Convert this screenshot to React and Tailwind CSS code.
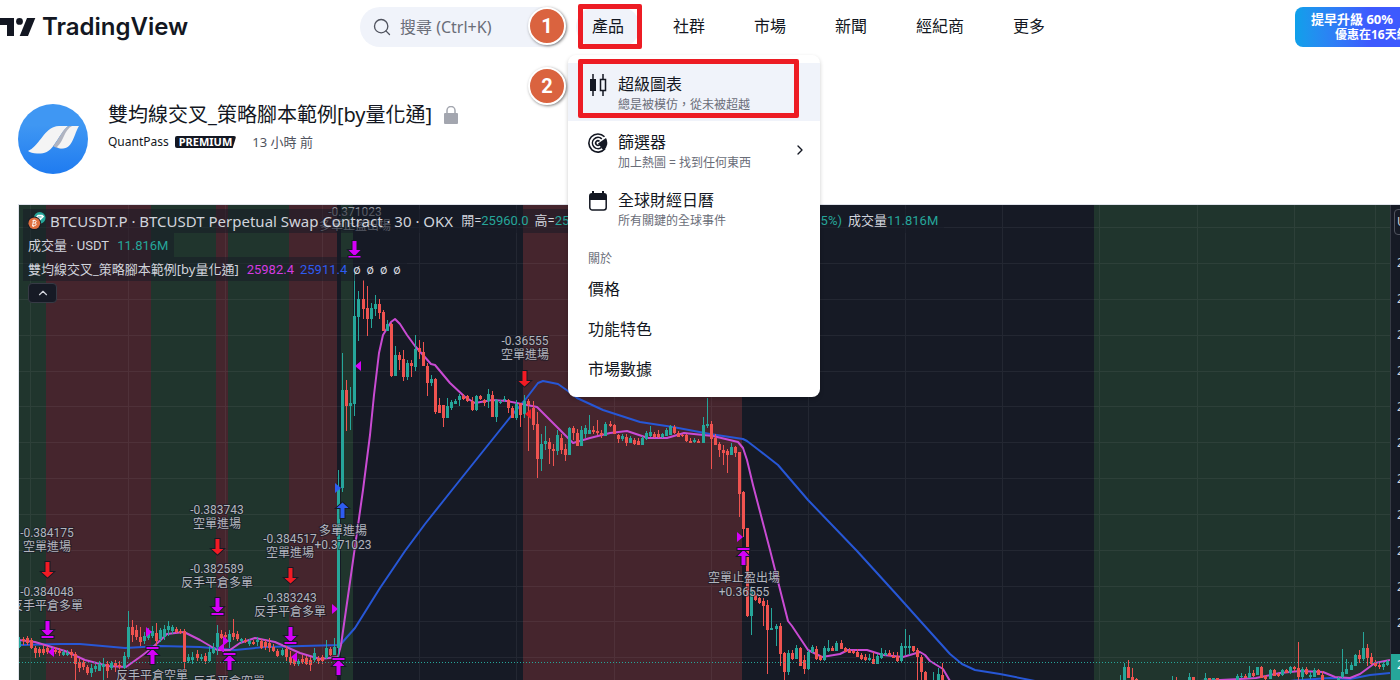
import { ChevronRight, ChevronUp, Search } from 'lucide-react'

const UP = '#26a69a'
const DOWN = '#ef5350'
const PINK = '#d500f9'
const RED = '#f31b24'
const BLUE = '#2e5cf0'

const NAV = ['社群', '市場', '新聞', '經紀商', '更多']

const BANDS = [
  [19, 46, '#20352d'],
  [46, 151, '#45252d'],
  [151, 216, '#20352d'],
  [216, 228, '#45252d'],
  [228, 289, '#20352d'],
  [289, 337, '#45252d'],
  [341, 353, '#20352d'],
  [523, 742, '#45252d'],
  [1094, 1390, '#20352d'],
]

const GRID_X = [30, 128, 225, 322, 419, 516, 614, 711, 808, 905, 1002, 1099, 1197, 1294, 1375]
const GRID_Y = [227, 263, 299, 335, 371, 406, 442, 478, 514, 550, 586, 621, 657]

// x, high, body top, body bottom, low, 1 = up / 0 = down
const CANDLES = [
  [19, 637, 641, 647, 648, 1], [23, 637, 639, 641, 645, 0], [27, 636, 638, 643, 645, 0], [31, 638, 640, 648, 649, 0],
  [35, 646, 648, 653, 658, 0], [39, 647, 649, 653, 657, 0], [43, 645, 649, 653, 655, 0], [47, 646, 648, 652, 654, 0],
  [51, 648, 650, 653, 655, 1], [55, 647, 650, 652, 654, 0], [59, 648, 651, 653, 656, 0], [63, 650, 652, 655, 656, 1],
  [67, 650, 653, 655, 656, 1], [71, 649, 652, 655, 658, 0], [75, 652, 654, 664, 680, 0], [79, 658, 662, 668, 672, 0],
  [83, 660, 662, 667, 670, 0], [87, 665, 667, 673, 675, 0], [91, 664, 668, 673, 677, 1], [95, 664, 666, 669, 672, 1],
  [99, 661, 664, 671, 671, 1], [103, 658, 664, 667, 681, 1], [107, 661, 664, 671, 678, 0], [111, 661, 663, 668, 670, 1],
  [115, 660, 663, 666, 672, 0], [119, 661, 665, 667, 670, 0], [124, 652, 656, 668, 669, 1], [128, 611, 627, 657, 659, 1],
  [132, 620, 627, 635, 642, 0], [136, 625, 630, 637, 640, 0], [140, 627, 637, 642, 646, 0], [144, 632, 636, 641, 644, 1],
  [148, 628, 631, 638, 640, 1], [152, 626, 631, 636, 638, 1], [156, 623, 633, 641, 646, 0], [160, 628, 630, 639, 642, 1],
  [164, 625, 629, 637, 640, 1], [168, 621, 626, 630, 636, 1], [172, 625, 627, 631, 634, 1], [176, 627, 629, 632, 633, 0],
  [180, 629, 631, 633, 634, 0], [184, 629, 631, 662, 671, 0], [188, 654, 657, 661, 663, 1], [192, 652, 657, 660, 664, 1],
  [197, 650, 654, 658, 661, 0], [201, 654, 657, 659, 661, 1], [205, 653, 656, 661, 664, 0], [209, 646, 652, 661, 662, 1],
  [213, 643, 648, 653, 654, 1], [217, 625, 633, 647, 655, 1], [221, 630, 634, 638, 639, 0], [225, 632, 635, 637, 642, 0],
  [229, 630, 634, 642, 648, 1], [233, 619, 633, 637, 640, 0], [237, 631, 634, 639, 641, 0], [241, 638, 639, 641, 643, 1],
  [245, 638, 640, 642, 643, 0], [249, 639, 641, 644, 646, 1], [253, 640, 642, 644, 645, 0], [257, 637, 640, 642, 646, 1],
  [261, 639, 641, 648, 649, 0], [265, 640, 642, 647, 650, 0], [269, 638, 643, 648, 652, 0], [273, 644, 647, 651, 652, 0],
  [277, 649, 651, 656, 657, 0], [282, 648, 650, 655, 656, 1], [286, 646, 649, 657, 661, 0], [290, 651, 657, 663, 665, 0],
  [294, 655, 659, 664, 666, 0], [298, 659, 661, 664, 666, 1], [302, 655, 659, 662, 664, 0], [306, 656, 658, 664, 665, 0],
  [310, 657, 660, 665, 671, 0], [314, 648, 653, 660, 662, 1], [318, 656, 658, 661, 664, 0], [322, 655, 657, 661, 664, 0],
  [326, 640, 648, 658, 659, 1], [330, 647, 649, 655, 656, 0], [334, 638, 647, 655, 655, 1], [338, 470, 488, 648, 658, 1],
  [342, 353, 390, 488, 492, 1], [346, 380, 390, 406, 431, 0], [350, 387, 403, 406, 430, 1], [354, 268, 316, 404, 416, 1],
  [358, 291, 299, 317, 341, 1], [363, 280, 299, 309, 319, 0], [367, 286, 308, 319, 336, 0], [371, 303, 308, 319, 328, 1],
  [375, 295, 304, 309, 316, 1], [379, 299, 304, 313, 319, 0], [383, 310, 312, 331, 331, 0], [387, 320, 324, 331, 331, 1],
  [391, 323, 324, 376, 377, 0], [395, 346, 355, 376, 376, 1], [399, 352, 355, 360, 370, 0], [403, 350, 359, 377, 381, 0],
  [407, 360, 363, 377, 380, 1], [411, 360, 363, 366, 377, 0], [415, 335, 349, 367, 371, 1], [419, 340, 348, 352, 359, 0],
  [423, 342, 352, 366, 366, 0], [427, 363, 366, 383, 396, 0], [431, 375, 379, 383, 386, 1], [435, 378, 379, 412, 414, 0],
  [439, 398, 405, 413, 413, 0], [443, 405, 405, 418, 427, 0], [447, 398, 406, 418, 418, 1], [451, 400, 402, 408, 410, 1],
  [455, 399, 401, 404, 404, 1], [459, 394, 396, 400, 406, 1], [463, 394, 396, 399, 400, 0], [467, 395, 396, 401, 402, 0],
  [472, 397, 401, 410, 411, 0], [476, 395, 396, 410, 411, 1], [480, 395, 396, 399, 400, 0], [484, 399, 400, 403, 406, 0],
  [488, 389, 394, 401, 408, 1], [492, 391, 395, 417, 417, 0], [496, 399, 400, 417, 422, 1], [500, 400, 402, 403, 404, 1],
  [504, 396, 399, 400, 402, 1], [508, 399, 400, 408, 413, 0], [512, 406, 408, 418, 418, 0], [516, 400, 404, 418, 420, 1],
  [520, 403, 403, 415, 427, 0], [524, 395, 401, 414, 418, 1], [528, 399, 401, 405, 451, 0], [533, 401, 408, 425, 430, 0],
  [537, 412, 424, 459, 478, 0], [541, 434, 444, 459, 471, 1], [545, 426, 441, 444, 450, 1], [549, 438, 442, 449, 464, 0],
  [553, 444, 449, 451, 466, 0], [557, 430, 435, 451, 455, 1], [561, 434, 438, 450, 454, 0], [565, 444, 449, 455, 461, 0],
  [569, 427, 428, 455, 455, 1], [573, 426, 428, 433, 440, 0], [577, 429, 433, 446, 446, 0], [581, 426, 430, 446, 446, 1],
  [585, 425, 428, 434, 438, 1], [589, 415, 430, 434, 434, 1], [593, 426, 430, 432, 434, 0], [597, 420, 431, 433, 435, 0],
  [601, 430, 433, 435, 438, 0], [605, 422, 424, 436, 436, 1], [610, 421, 424, 426, 427, 0], [614, 424, 425, 434, 434, 0],
  [618, 434, 435, 439, 443, 0], [622, 434, 436, 439, 441, 1], [626, 434, 437, 443, 446, 0], [630, 436, 438, 443, 443, 1],
  [634, 438, 440, 444, 445, 0], [638, 438, 441, 445, 445, 0], [642, 436, 438, 445, 445, 1], [646, 431, 433, 439, 440, 1],
  [650, 426, 432, 436, 437, 1], [654, 432, 434, 437, 438, 0], [658, 430, 434, 437, 438, 0], [662, 433, 434, 437, 438, 1],
  [666, 428, 430, 436, 436, 1], [670, 425, 426, 435, 435, 1], [674, 425, 427, 433, 434, 0], [678, 431, 433, 437, 437, 0],
  [682, 434, 435, 436, 437, 0], [686, 434, 435, 441, 442, 0], [690, 438, 441, 443, 443, 0], [694, 438, 440, 442, 443, 1],
  [698, 439, 441, 443, 443, 0], [703, 417, 425, 443, 443, 1], [707, 398, 424, 426, 428, 1], [711, 421, 424, 439, 469, 0],
  [715, 434, 438, 445, 445, 0], [719, 442, 444, 450, 457, 0], [723, 445, 450, 453, 465, 0], [727, 449, 451, 455, 473, 0],
  [731, 443, 447, 455, 455, 1], [735, 446, 447, 453, 457, 0], [739, 452, 452, 494, 517, 0], [743, 491, 492, 529, 537, 0],
  [747, 528, 528, 616, 617, 0], [751, 586, 589, 616, 635, 1], [755, 593, 595, 600, 601, 0], [759, 597, 598, 603, 604, 0],
  [763, 598, 601, 606, 626, 0], [767, 600, 605, 630, 674, 0], [771, 608, 628, 630, 630, 1], [776, 624, 626, 629, 646, 1],
  [780, 623, 626, 654, 666, 0], [784, 652, 653, 672, 680, 0], [788, 650, 653, 672, 675, 1], [792, 650, 653, 659, 660, 0],
  [796, 645, 648, 659, 659, 1], [800, 647, 648, 666, 666, 0], [804, 655, 660, 669, 674, 0], [808, 650, 652, 669, 670, 1],
  [812, 645, 647, 652, 653, 1], [816, 646, 649, 659, 660, 0], [820, 655, 656, 660, 661, 0], [824, 646, 648, 660, 661, 1],
  [828, 640, 648, 651, 652, 1], [832, 646, 648, 651, 651, 0], [836, 641, 643, 651, 651, 1], [841, 640, 643, 649, 649, 0],
  [845, 647, 648, 652, 652, 0], [849, 648, 650, 653, 653, 0], [853, 650, 651, 653, 654, 0], [857, 649, 652, 657, 657, 0],
  [861, 653, 655, 659, 660, 0], [865, 654, 657, 660, 661, 0], [869, 654, 658, 660, 661, 1], [873, 652, 659, 664, 664, 0],
  [877, 654, 656, 664, 664, 1], [881, 648, 653, 658, 659, 1], [885, 650, 653, 655, 656, 1], [889, 650, 653, 656, 656, 0],
  [893, 652, 656, 658, 658, 0], [897, 652, 656, 661, 662, 0], [901, 643, 646, 661, 662, 1], [905, 629, 646, 648, 655, 1],
  [909, 635, 646, 648, 655, 1], [913, 646, 646, 651, 652, 0], [917, 648, 650, 657, 681, 0], [921, 655, 657, 672, 681, 0],
  [925, 671, 672, 681, 681, 0], [933, 672, 680, 681, 681, 1], [938, 668, 674, 681, 681, 1], [942, 663, 675, 681, 681, 0],
  [1120, 675, 681, 681, 681, 1], [1124, 663, 667, 681, 681, 1], [1128, 660, 667, 678, 678, 0], [1132, 668, 677, 681, 681, 0],
  [1136, 678, 679, 681, 681, 0], [1172, 676, 680, 681, 681, 1], [1176, 677, 680, 681, 681, 0], [1189, 673, 677, 681, 681, 1],
  [1193, 677, 677, 681, 681, 0], [1205, 673, 678, 681, 681, 1], [1209, 678, 678, 681, 681, 0], [1213, 678, 678, 681, 681, 1],
  [1217, 678, 678, 681, 681, 0], [1237, 674, 676, 681, 681, 1], [1241, 673, 676, 677, 678, 1], [1245, 674, 676, 678, 678, 0],
  [1249, 666, 673, 678, 678, 1], [1253, 670, 673, 676, 677, 0], [1257, 667, 667, 675, 675, 1], [1261, 666, 667, 678, 678, 0],
  [1265, 675, 676, 679, 680, 0], [1270, 669, 670, 679, 679, 1], [1274, 669, 670, 676, 676, 0], [1278, 673, 674, 676, 677, 0],
  [1282, 669, 670, 675, 676, 1], [1286, 669, 670, 673, 673, 0], [1290, 666, 667, 673, 674, 1], [1294, 666, 667, 669, 671, 0],
  [1298, 642, 668, 677, 680, 0], [1302, 667, 669, 677, 680, 1], [1306, 667, 669, 674, 675, 0], [1310, 672, 675, 677, 679, 1],
  [1314, 668, 670, 677, 677, 1], [1318, 669, 670, 675, 675, 0], [1322, 671, 675, 681, 681, 0], [1338, 677, 678, 681, 681, 1],
  [1342, 649, 672, 677, 678, 1], [1346, 659, 669, 674, 674, 1], [1351, 662, 665, 670, 670, 1], [1355, 654, 655, 666, 666, 1],
  [1359, 650, 655, 659, 663, 0], [1363, 632, 648, 659, 661, 1], [1367, 644, 648, 658, 666, 0], [1371, 653, 657, 664, 665, 0],
  [1375, 660, 663, 666, 667, 0], [1379, 663, 665, 667, 669, 0], [1383, 662, 664, 667, 670, 1], [1387, 660, 661, 665, 666, 1],
]

const FAST_MA = [
  '19,640 35,642 65,651 85,660 108,666 126,667 140,657 152,648 167,634 184,632 200,640 217,650 230,650 240,643 255,638 275,642 300,653 320,659 338,657 341,645 350,582 363,490 370,435 374,395 379,353 383,335 391,322 395,319 400,324 407,335 415,346 431,364 435,365 450,383 465,397 475,403 492,400 507,401 537,407 555,425 573,443 590,438 610,433 627,431 648,438 667,438 684,433 713,436 738,442 743,448 747,460 753,485 770,550 788,621 792,626 808,650 822,657 840,654 848,650 867,650 883,655 903,657 920,652 925,655 930,661 943,669 950,681',
  '1200,681 1240,679 1256,678 1280,673 1300,671 1323,672 1335,677 1350,678 1360,674 1375,663 1390,660',
]
const SLOW_MA = [
  '21,645 60,644 80,644 125,648 160,646 200,647 235,650 265,647 340,645 355,628 380,588 405,551 425,524 452,490 512,415 525,400 538,383 543,381 548,382 558,384 568,391 577,398 603,410 640,422 673,427 710,434 743,439 747,441 760,451 778,465 808,500 857,551 897,595 923,624 950,654 962,664 975,670 1000,674 1035,681',
  '1290,681 1300,680 1330,678 1350,679 1370,675 1390,673',
]

const ARROWS = [
  { x: 47, y: 562, color: RED },
  { x: 217, y: 539, color: RED },
  { x: 290, y: 568, color: RED },
  { x: 524, y: 371, color: RED },
  { x: 47, y: 621, color: PINK, bar: true },
  { x: 217, y: 598, color: PINK, bar: true },
  { x: 290, y: 627, color: PINK, bar: true },
  { x: 354, y: 241, color: PINK, bar: true },
  { x: 152, y: 664, color: PINK, bar: true, up: true },
  { x: 229, y: 670, color: PINK, bar: true, up: true },
  { x: 338, y: 675, color: PINK, bar: true, up: true },
  { x: 743, y: 565, color: PINK, bar: true, up: true },
  { x: 342, y: 518, color: BLUE, up: true },
]

// x of the flat side, y of the tip, direction
const FLAGS = [
  [54, 652, -1, PINK],
  [224, 648, -1, PINK],
  [297, 657, -1, PINK],
  [361, 366, -1, PINK],
  [531, 414, -1, RED],
  [146, 632, 1, PINK],
  [223, 641, 1, PINK],
  [332, 609, 1, PINK],
  [737, 537, 1, PINK],
  [335, 488, 1, BLUE],
]

const LABELS = [
  [47, 537, '-0.384175', '空單進場'],
  [47, 596, '-0.384048', '反手平倉多單'],
  [217, 514, '-0.383743', '空單進場'],
  [217, 573, '-0.382589', '反手平倉多單'],
  [290, 543, '-0.384517', '空單進場'],
  [290, 602, '-0.383243', '反手平倉多單'],
  [343, 535, '多單進場', '+0.371023'],
  [355, 216, '-0.371023', '多單止盈出場'],
  [525, 345, '-0.36555', '空單進場'],
  [744, 582, '空單止盈出場', '+0.36555'],
  [152, 680, '反手平倉空單', ''],
  [229, 686, '反手平倉空單', ''],
]

function Arrow({ x, y, color, up, bar }) {
  const transform = `translate(${x + 0.5} ${y}) scale(1 ${up ? -1 : 1})`
  return (
    <g transform={transform} fill={color} stroke="#161a25" strokeWidth="2" paintOrder="stroke">
      <path d={bar ? 'M-2 0H2V9H6L0 15L-6 9H-2Z' : 'M-2 0H2V10H6L0 15.500L-6 10H-2Z'} />
      {bar && <path d="M-6 15H6V17H-6Z" />}
    </g>
  )
}

function Chart() {
  return (
    <svg viewBox="19 205 1371 475" className="block w-full" role="img" aria-label="BTCUSDT.P">
      <rect x="19" y="205" width="1371" height="475" fill="#161a25" />
      {BANDS.map(([from, to, fill]) => (
        <rect key={from} x={from} y="205" width={to - from} height="475" fill={fill} />
      ))}
      <g fill="#f0f3fa" opacity="0.06">
        {GRID_X.map((x) => (
          <rect key={x} x={x} y="205" width="1" height="475" />
        ))}
        {GRID_Y.map((y) => (
          <rect key={y} x="19" y={y} width="1371" height="1" />
        ))}
      </g>

      <g fill="none" strokeWidth="2" strokeLinejoin="round">
        {SLOW_MA.map((points) => (
          <polyline key={points} points={points} stroke="#2757d6" />
        ))}
        {FAST_MA.map((points) => (
          <polyline key={points} points={points} stroke="#c94bd3" />
        ))}
      </g>

      {CANDLES.map(([x, high, top, bottom, low, up]) => (
        <g key={x} fill={up ? UP : DOWN}>
          <rect x={x} y={high} width="1" height={Math.max(low - high, 1)} />
          <rect x={x - 1} y={top} width="3" height={Math.max(bottom - top, 1)} />
        </g>
      ))}

      <path d="M19 662.500H1390" stroke={UP} strokeDasharray="1 2" shapeRendering="crispEdges" />

      {FLAGS.map(([x, y, dir, color]) => (
        <path key={`${x}-${y}`} d={`M${x} ${y - 5}V${y + 5}L${x + dir * 6} ${y}Z`} fill={color} />
      ))}
      {ARROWS.map((a) => (
        <Arrow key={`${a.x}-${a.y}`} {...a} />
      ))}

      <g
        className="font-['Roboto','Noto_Sans_CJK_TC',sans-serif] text-[12px]"
        fill="#b2b5be"
        stroke="#161a25"
        strokeWidth="2"
        strokeOpacity="0.6"
        paintOrder="stroke"
        textAnchor="middle"
      >
        {LABELS.map(([x, y, first, second]) => (
          <g key={`${x}-${y}`} opacity={y === 216 ? 0.8 : 1}>
            <text x={x} y={y}>
              {first}
            </text>
            {second && (
              <text x={x} y={y + 14}>
                {second}
              </text>
            )}
          </g>
        ))}
      </g>
    </svg>
  )
}

function Quote({ label, value }) {
  return (
    <span>
      {label}
      <span className="text-[#26a69a]">{value}</span>
    </span>
  )
}

function Legend() {
  const row = 'flex h-6 items-center whitespace-nowrap bg-[#161a25]/50 pl-[5px] pr-1.5'
  return (
    <div className="absolute left-1 top-1 flex flex-col items-start font-['Roboto','Noto_Sans_CJK_TC',sans-serif] text-[13px] text-[#d1d4dc]">
      <div className={row}>
        <svg viewBox="0 0 20 20" className="mr-1 size-[18px]" aria-hidden="true">
          <circle cx="13" cy="6.500" r="6.500" fill="#26a69a" />
          <path d="M9 5l2-2h5l2 2-5 5z" fill="#fff" />
          <path d="M11 5.500h4" stroke="#26a69a" />
          <circle cx="7" cy="12.500" r="7.500" fill="#161a25" />
          <circle cx="7" cy="12.500" r="6.500" fill="#e0703f" />
          <path
            d="M5 9.500h3q1.500.3 1 1.500l-1 1.200q1.700.6.800 2.200-.5.900-2 .9H4.500M6 9.500l-1 6M5.500 12.300H8M6.800 8.200l-.3 1.300M6 15.300l-.2 1.400"
            stroke="#fff"
            fill="none"
          />
        </svg>
        <span className="mr-2 font-['Noto_Sans',sans-serif] text-[15px]">
          BTCUSDT.P · BTCUSDT Perpetual Swap Contract · 30 · OKX
        </span>
        <span className="flex gap-1.5">
          <Quote label="開=" value="25960.0" />
          <Quote label="高=" value="25991.6" />
          <Quote label="低=" value="25957.6" />
          <Quote label="收=" value="25972.3" />
          <span className="text-[#26a69a]">+12.3 (+0.05%)</span>
          <Quote label="成交量" value="11.816M" />
        </span>
      </div>
      <div className={`${row} pt-0.5`}>
        成交量 · USDT<span className="ml-2 text-[#26a69a]">11.816M</span>
      </div>
      <div className={`${row} pt-0.5`}>
        <span className="font-['Noto_Sans','Noto_Sans_CJK_TC',sans-serif]">雙均線交叉_策略腳本範例[by量化通]</span>
        <span className="ml-2 text-[#d33be0]">25982.4</span>
        <span className="ml-1.5 text-[#2e5cf0]">25911.4</span>
        <span className="ml-1.5 flex gap-1.5">
          <span>ø</span>
          <span>ø</span>
          <span>ø</span>
          <span>ø</span>
        </span>
      </div>
      <button
        type="button"
        aria-label="收合"
        className="ml-[5px] mt-0.5 flex h-5 w-[29px] items-center justify-center rounded-sm border border-[#363a45] bg-[#161a25]"
      >
        <ChevronUp className="size-3.5" />
      </button>
    </div>
  )
}

function PriceScale() {
  return (
    <div className="relative w-2.5 shrink-0 overflow-hidden border-l border-[#363a45] bg-[#161a25] text-[12px] text-[#d1d4dc]">
      <div className="absolute left-[3px] top-1 flex h-[26px] w-14 items-center rounded-sm border border-[#50535e] pl-0.5">
        USDT
      </div>
      <div className="flex flex-col pl-1.5 pt-10">
        {GRID_Y.slice(1, -1).map((y) => (
          <span key={y} className="h-9 leading-9">
            2
          </span>
        ))}
      </div>
      <div className="absolute -left-px bottom-0 h-[26px] w-16 bg-[#26a69a] pl-[7px] pt-0.5 text-white">2</div>
    </div>
  )
}

function Step({ n, className }) {
  return (
    <span
      className={`absolute flex size-[38px] items-center justify-center rounded-full border-2 border-white bg-[#da633f] font-[Roboto,sans-serif] text-xl font-bold text-white shadow-[1px_1px_3px_rgba(0,0,0,0.5)] ${className}`}
    >
      {n}
    </span>
  )
}

function CandlesIcon() {
  return (
    <svg viewBox="0 0 20 24" className="h-6 w-5" aria-hidden="true">
      <path d="M5 1v22M15 1v5M15 18v5" stroke="#131722" strokeWidth="1.500" />
      <path d="M2 6h6v12H2z" fill="#131722" />
      <path d="M12.500 6.500h5v11h-5z" fill="none" stroke="#131722" strokeWidth="1.500" />
    </svg>
  )
}

function ScreenerIcon() {
  return (
    <svg viewBox="0 0 20 20" className="size-5" fill="none" stroke="#131722" strokeWidth="1.600" aria-hidden="true">
      <path d="M16.500 3.700A9.100 9.100 0 1 0 17 15.800" />
      <path d="M13.800 5.800A5.600 5.600 0 1 0 13.500 14.400" />
      <path d="M11.500 8.300A2.300 2.300 0 1 0 11.600 11.700" />
      <path d="M10 10.500L18 5a9.600 9.600 0 0 1-2.500 12.500z" fill="#131722" stroke="none" />
    </svg>
  )
}

function CalendarIcon() {
  return (
    <svg viewBox="0 0 20 20" className="size-5" aria-hidden="true">
      <path d="M1.800 6v10.500a2.500 2.500 0 0 0 2.500 2.500h11.400a2.500 2.500 0 0 0 2.500-2.500V6" fill="none" stroke="#131722" strokeWidth="1.500" />
      <path d="M1 9V5a3 3 0 0 1 3-3V0h2v2h8V0h2v2a3 3 0 0 1 3 3v4z" fill="#131722" />
    </svg>
  )
}

const PRODUCTS = [
  { title: '超級圖表', note: '總是被模仿，從未被超越', icon: CandlesIcon, active: true },
  { title: '篩選器', note: '加上熱圖 = 找到任何東西', icon: ScreenerIcon, more: true },
  { title: '全球財經日曆', note: '所有關鍵的全球事件', icon: CalendarIcon },
]

function ProductMenu() {
  return (
    <div className="absolute -left-2 top-12 z-10 w-[252px] rounded-lg bg-white py-2 shadow-[0_2px_4px_rgba(0,0,0,0.2)]">
      {PRODUCTS.map(({ title, note, icon: Icon, active, more }) => (
        <a
          key={title}
          href="#"
          className={`relative flex h-[58px] items-start pl-5 pr-3 pt-2.5 ${active ? 'bg-[#f0f3fa]' : ''}`}
        >
          <span className="flex h-6 w-[30px] items-center">
            <Icon />
          </span>
          <span className="flex flex-1 flex-col">
            <span className="text-base leading-[22px]">{title}</span>
            <span className="text-[12px] leading-5 text-[#6a6d78]">{note}</span>
          </span>
          {more && <ChevronRight className="mt-[11px] size-4" />}
          {active && (
            <>
              <span className="absolute -top-1 left-2.5 h-[59px] w-[221px] rounded-xs border-[5px] border-[#ed1c24]" />
              <Step n="2" className="-left-10 top-1" />
            </>
          )}
        </a>
      ))}
      <div className="px-5 pt-3 text-[12px] leading-5 text-[#6a6d78]">關於</div>
      {['價格', '功能特色', '市場數據'].map((item) => (
        <a key={item} href="#" className="block px-5 text-base leading-10">
          {item}
        </a>
      ))}
    </div>
  )
}

function Header() {
  return (
    <header className="flex h-[54px] items-center">
      <a href="#" className="flex w-[360px] shrink-0 items-center gap-1.5" aria-label="TradingView">
        <svg viewBox="0 0 36 18" className="h-[18px] w-9" fill="#131722" aria-hidden="true">
          <path d="M0 0h14v18H7V7H0z" />
          <circle cx="19.500" cy="3.400" r="3.400" />
          <path d="M27 0h8.300L28 18h-8.300z" />
        </svg>
        <span className="font-[Inter,sans-serif] text-2xl font-semibold">TradingView</span>
      </a>

      <label className="flex h-10 w-[206px] shrink-0 items-center gap-2 rounded-full bg-[#f0f3fa] pl-3">
        <Search className="size-5 shrink-0 text-[#50535e]" strokeWidth={1.6} />
        <input
          type="search"
          aria-label="搜尋"
          placeholder="搜尋 (Ctrl+K)"
          className="w-32 bg-transparent text-base outline-none placeholder:text-[#6a6d78]"
        />
      </label>

      <nav className="ml-2.5 flex items-center gap-[17px] whitespace-nowrap leading-[38px]">
        <div className="relative">
          <button type="button" className="h-10 rounded-full bg-[#f0f3fa] px-4 pb-0.5">
            產品
          </button>
          <span className="absolute -top-[3px] left-0.5 h-[45px] w-16 rounded-xs border-[5px] border-[#ed1c24]" />
          <Step n="1" className="-left-12 top-0" />
          <ProductMenu />
        </div>
        {NAV.map((item) => (
          <a key={item} href="#" className="px-4 pb-0.5">
            {item}
          </a>
        ))}
      </nav>

      <a
        href="#"
        className="ml-auto flex h-10 w-[105px] shrink-0 flex-col justify-center overflow-hidden whitespace-nowrap rounded-l-lg bg-linear-to-r from-[#0ea0ea] to-[#3d5afe] to-70% pl-4 font-bold text-white"
      >
        <span className="text-[13px] leading-4">提早升級 60%</span>
        <span className="pl-6 text-[12px] leading-4">優惠在16天結</span>
      </a>
    </header>
  )
}

function AuthorBar() {
  return (
    <div className="flex items-start gap-5 px-[18px] pb-[30px] pt-[50px]">
      <svg viewBox="0 0 70 70" className="size-[70px] shrink-0" aria-hidden="true">
        <defs>
          <linearGradient id="avatar" x1="0" y1="0" x2="0" y2="1">
            <stop offset="0.3" stopColor="#3f97f3" />
            <stop offset="1" stopColor="#1f7bf0" />
          </linearGradient>
        </defs>
        <circle cx="35" cy="35" r="35" fill="url(#avatar)" />
        <path d="M10 47C20 43 26 26 36 23Q38 22 41 22H50C45 26 41 34 36 41C31 49 24 50 19 49.500Q13 49 10 47Z" fill="#f4f4f4" />
        <path d="M35 42C41 36 44 25 51 22H54L46 44C42 45 38 44 35 42Z" fill="#b0b4c0" />
        <path d="M39 43C46 37 46 26 54 22H61C56 30 55 44 45 44.500C42 44.500 40 44 39 43Z" fill="#f4f4f4" />
      </svg>
      <div>
        <h1 className="flex items-center gap-3 text-xl leading-[22px]">
          雙均線交叉_策略腳本範例[by量化通]
          <svg viewBox="0 0 14 18" className="h-[18px] w-3.5" aria-hidden="true">
            <rect y="7" width="14" height="11" rx="1" fill="#a3a6af" />
            <path d="M3 8V4.500a4 4 0 0 1 8 0V8" fill="none" stroke="#a3a6af" strokeWidth="1.500" />
          </svg>
        </h1>
        <div className="mt-1.5 flex items-center text-[13px] leading-5">
          <span className="text-[12px]">QuantPass</span>
          <span className="ml-1.5 rounded-xs bg-[#131722] px-1 text-[11px] font-bold leading-3 text-white [clip-path:polygon(0_0,100%_0,94%_100%,0_100%)]">
            PREMIUM
          </span>
          <time className="ml-4 text-[#50535e]">13 小時 前</time>
        </div>
      </div>
    </div>
  )
}

export default function App() {
  return (
    <div className="overflow-hidden bg-white font-['Noto_Sans','Noto_Sans_CJK_TC',sans-serif] text-[#131722]">
      <Header />
      <AuthorBar />
      <div className="ml-[18px] flex border-l border-t border-[#e0e3eb]">
        <div className="relative min-w-0 flex-1">
          <Chart />
          <Legend />
        </div>
        <PriceScale />
      </div>
    </div>
  )
}
